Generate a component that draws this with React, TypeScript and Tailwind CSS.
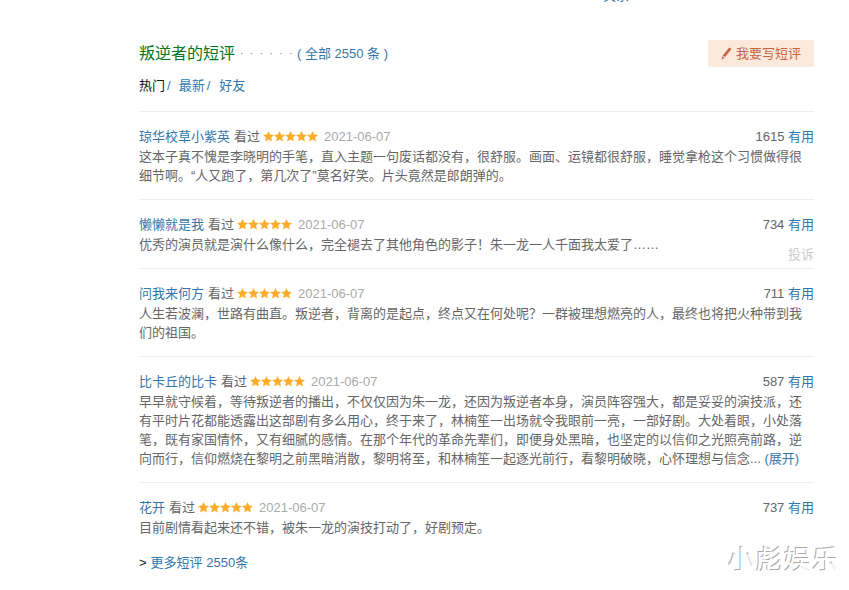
const FONT = "font-['Liberation_Sans','Noto_Sans_CJK_SC',sans-serif]";

const reviews = [
  {
    user: "琼华校草小紫英",
    count: 1615,
    lines: [
      "这本子真不愧是李晓明的手笔，直入主题一句废话都没有，很舒服。画面、运镜都很舒服，睡觉拿枪这个习惯做得很",
      "细节啊。“人又跑了，第几次了”莫名好笑。片头竟然是郎朗弹的。",
    ],
  },
  {
    user: "懒懒就是我",
    count: 734,
    report: true,
    lines: ["优秀的演员就是演什么像什么，完全褪去了其他角色的影子！朱一龙一人千面我太爱了……"],
  },
  {
    user: "问我来何方",
    count: 711,
    lines: [
      "人生若波澜，世路有曲直。叛逆者，背离的是起点，终点又在何处呢？一群被理想燃亮的人，最终也将把火种带到我",
      "们的祖国。",
    ],
  },
  {
    user: "比卡丘的比卡",
    count: 587,
    more: true,
    lines: [
      "早早就守候着，等待叛逆者的播出，不仅仅因为朱一龙，还因为叛逆者本身，演员阵容强大，都是妥妥的演技派，还",
      "有平时片花都能透露出这部剧有多么用心，终于来了，林楠笙一出场就令我眼前一亮，一部好剧。大处着眼，小处落",
      "笔，既有家国情怀，又有细腻的感情。在那个年代的革命先辈们，即便身处黑暗，也坚定的以信仰之光照亮前路，逆",
      "向而行，信仰燃烧在黎明之前黑暗消散，黎明将至，和林楠笙一起逐光前行，看黎明破晓，心怀理想与信念...",
    ],
  },
  {
    user: "花开",
    count: 737,
    lines: ["目前剧情看起来还不错，被朱一龙的演技打动了，好剧预定。"],
  },
];

const Stars = () => (
  <svg width="55" height="11" viewBox="0 0 55 11" className="ml-[3px] mr-[5px] shrink-0">
    {[0, 11, 22, 33, 44].map((x) => (
      <path
        key={x}
        transform={`translate(${x} 0)`}
        d="M5.5 0l1.6 3.6 3.9.4-2.9 2.6.8 3.9-3.4-2-3.4 2 .8-3.9L0 4l3.9-.4z"
        fill="#ffac2d"
      />
    ))}
  </svg>
);

const Pencil = () => (
  <svg width="11" height="13" viewBox="0 0 11 13" className="mr-[4px] shrink-0">
    <path d="M8.2 0.5l2.3 1.4-6.4 8.2-2.4-1.5z" fill="#ca6445" />
    <path d="M1.4 9.3l2.2 1.4-3 2z" fill="#ca6445" />
  </svg>
);

const App = () => {
  return (
    <div className={`${FONT} relative h-[590px] w-[849px] overflow-hidden bg-white text-[13px] text-[#666]`}>
      <div className="flex h-[5px] items-end justify-end overflow-hidden pr-[220px]">
        <span className="shrink-0 text-[13px] leading-[19px] text-[#37a]">关系</span>
      </div>

      <div className="ml-[139px] w-[675px]">
        <div className="mt-[35px] flex h-[27px] items-center justify-between">
          <div className="flex items-center">
            <span className="text-[16px] text-[#072]">叛逆者的短评</span>
            <span className="ml-[5px] text-[10px] tracking-[6.5px] text-[#777]">······</span>
            <span className="-ml-[2px] text-[13px] text-[#37a]">( 全部 2550 条 )</span>
          </div>
          <a className="flex h-[27px] w-[106px] items-center justify-center rounded-[2px] bg-[#fbe9dc] text-[13px] text-[#ca6445]">
            <Pencil />
            我要写短评
          </a>
        </div>

        <div className="mt-[9px] flex h-[20px] items-center text-[13px]">
          <span className="text-[#111]">热门</span>
          <span className="ml-[2px] text-[#37a]">/</span>
          <span className="ml-[8px] text-[#37a]">最新</span>
          <span className="ml-[2px] text-[#37a]">/</span>
          <span className="ml-[9px] text-[#37a]">好友</span>
        </div>

        <div className="mt-[15px]">
          {reviews.map((r) => (
            <div key={r.user} className="relative border-t border-[#eee] py-[14px]">
              <div className="flex h-[21px] items-center justify-between">
                <div className="flex items-center">
                  <span className="text-[#37a]">{r.user}</span>
                  <span className="ml-[4px]">看过</span>
                  <Stars />
                  <span className="ml-[1px] text-[#aaa]">2021-06-07</span>
                </div>
                <div>
                  <span>{r.count}</span> <span className="text-[#37a]">有用</span>
                </div>
              </div>
              <p className="whitespace-nowrap leading-[19px]">
                {r.lines.map((line, i) => (
                  <span key={i} className="block">
                    {line}
                    {r.more && i === r.lines.length - 1 && <span className="text-[#37a]"> (展开)</span>}
                  </span>
                ))}
              </p>
              {r.report && <span className="absolute bottom-[4px] right-0 text-[#ccc]">投诉</span>}
            </div>
          ))}
        </div>

        <div className="mt-[2px] flex h-[20px] items-center text-[13px]">
          <span className="text-[#111]">&gt;</span>
          <span className="ml-[4px] text-[#37a]">更多短评 2550条</span>
        </div>
      </div>

      <div className="absolute left-[728px] top-[543px] text-[27px] leading-[36px] tracking-[1px] text-white [text-shadow:-1px_-1px_0_#aaa]">
        小彪娱乐
      </div>
    </div>
  );
};

export default App;
